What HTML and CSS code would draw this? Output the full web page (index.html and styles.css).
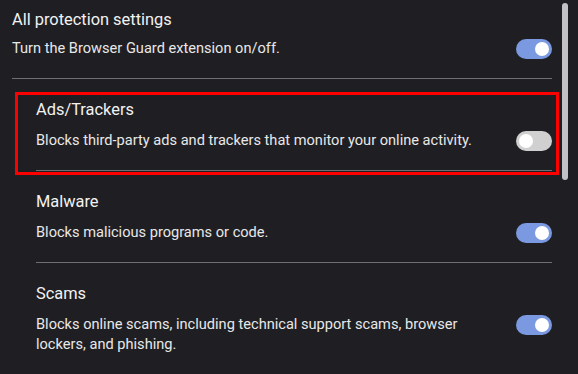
FILE: index.html
```html
<!DOCTYPE html>
<html>
<head>
<meta charset="utf-8">
<link rel="stylesheet" href="styles.css">
</head>
<body>
<div class="page">
  <div class="content">
    <section class="item item-main">
      <div class="title">All protection settings</div>
      <div class="row">
        <div class="desc">Turn the Browser Guard extension on/off.</div>
        <span class="toggle on"><span class="knob"></span></span>
      </div>
    </section>
    <div class="divider"></div>
    <div class="sub">
      <section class="item highlighted">
        <div class="title">Ads/Trackers</div>
        <div class="row">
          <div class="desc">Blocks third-party ads and trackers that monitor your online activity.</div>
          <span class="toggle off"><span class="knob"></span></span>
        </div>
      </section>
      <div class="divider"></div>
      <section class="item">
        <div class="title">Malware</div>
        <div class="row">
          <div class="desc">Blocks malicious programs or code.</div>
          <span class="toggle on"><span class="knob"></span></span>
        </div>
      </section>
      <div class="divider"></div>
      <section class="item">
        <div class="title">Scams</div>
        <div class="row">
          <div class="desc">Blocks online scams, including technical support scams, browser lockers, and phishing.</div>
          <span class="toggle on"><span class="knob"></span></span>
        </div>
      </section>
    </div>
  </div>
  <div class="scrollbar"></div>
</div>
</body>
</html>
```
FILE: styles.css
```css
html, body {
  margin: 0;
  padding: 0;
  background: #1f1f23;
}
body {
  font-family: Roboto, "Liberation Sans", sans-serif;
  color: #ececec;
  width: 578px;
  height: 374px;
  overflow: hidden;
}
.page {
  display: flex;
  align-items: flex-start;
}
.content {
  width: 540px;
  margin-left: 12px;
}
.scrollbar {
  width: 6px;
  height: 177px;
  margin-top: 3px;
  margin-left: 10px;
  background: #c2c2c6;
  border-radius: 3px;
}
.sub {
  margin-left: 24px;
}
.item {
  display: flex;
  flex-direction: column;
  padding: 21px 0 19px;
}
.item-main {
  padding-top: 10px;
}
.item-main .row {
  margin-top: 8px;
}
.title {
  font-size: 16.4px;
  line-height: 20px;
  color: #f2f2f2;
}
.row {
  display: flex;
  align-items: flex-start;
  margin-top: 10px;
}
.desc {
  flex: 1;
  font-size: 14.6px;
  line-height: 20px;
  color: #e8e8e8;
}
.toggle {
  position: relative;
  flex: none;
  width: 36px;
  height: 20px;
  margin-top: 1px;
  margin-left: 30px;
  border-radius: 10px;
  display: flex;
  align-items: center;
  padding: 0 3px;
  box-sizing: border-box;
}
.toggle.on {
  background: #7a99e0;
  justify-content: flex-end;
}
.toggle.off {
  background: #d0d0d0;
  justify-content: flex-start;
}
.knob {
  width: 14px;
  height: 14px;
  border-radius: 50%;
  background: #ffffff;
}
.divider {
  height: 1px;
  background: #707072;
}
.highlighted {
  position: relative;
}
.highlighted::after {
  content: "";
  position: absolute;
  left: -21px;
  right: -7px;
  top: 13px;
  bottom: -5px;
  border: 3px solid #ff0000;
  pointer-events: none;
}
```
